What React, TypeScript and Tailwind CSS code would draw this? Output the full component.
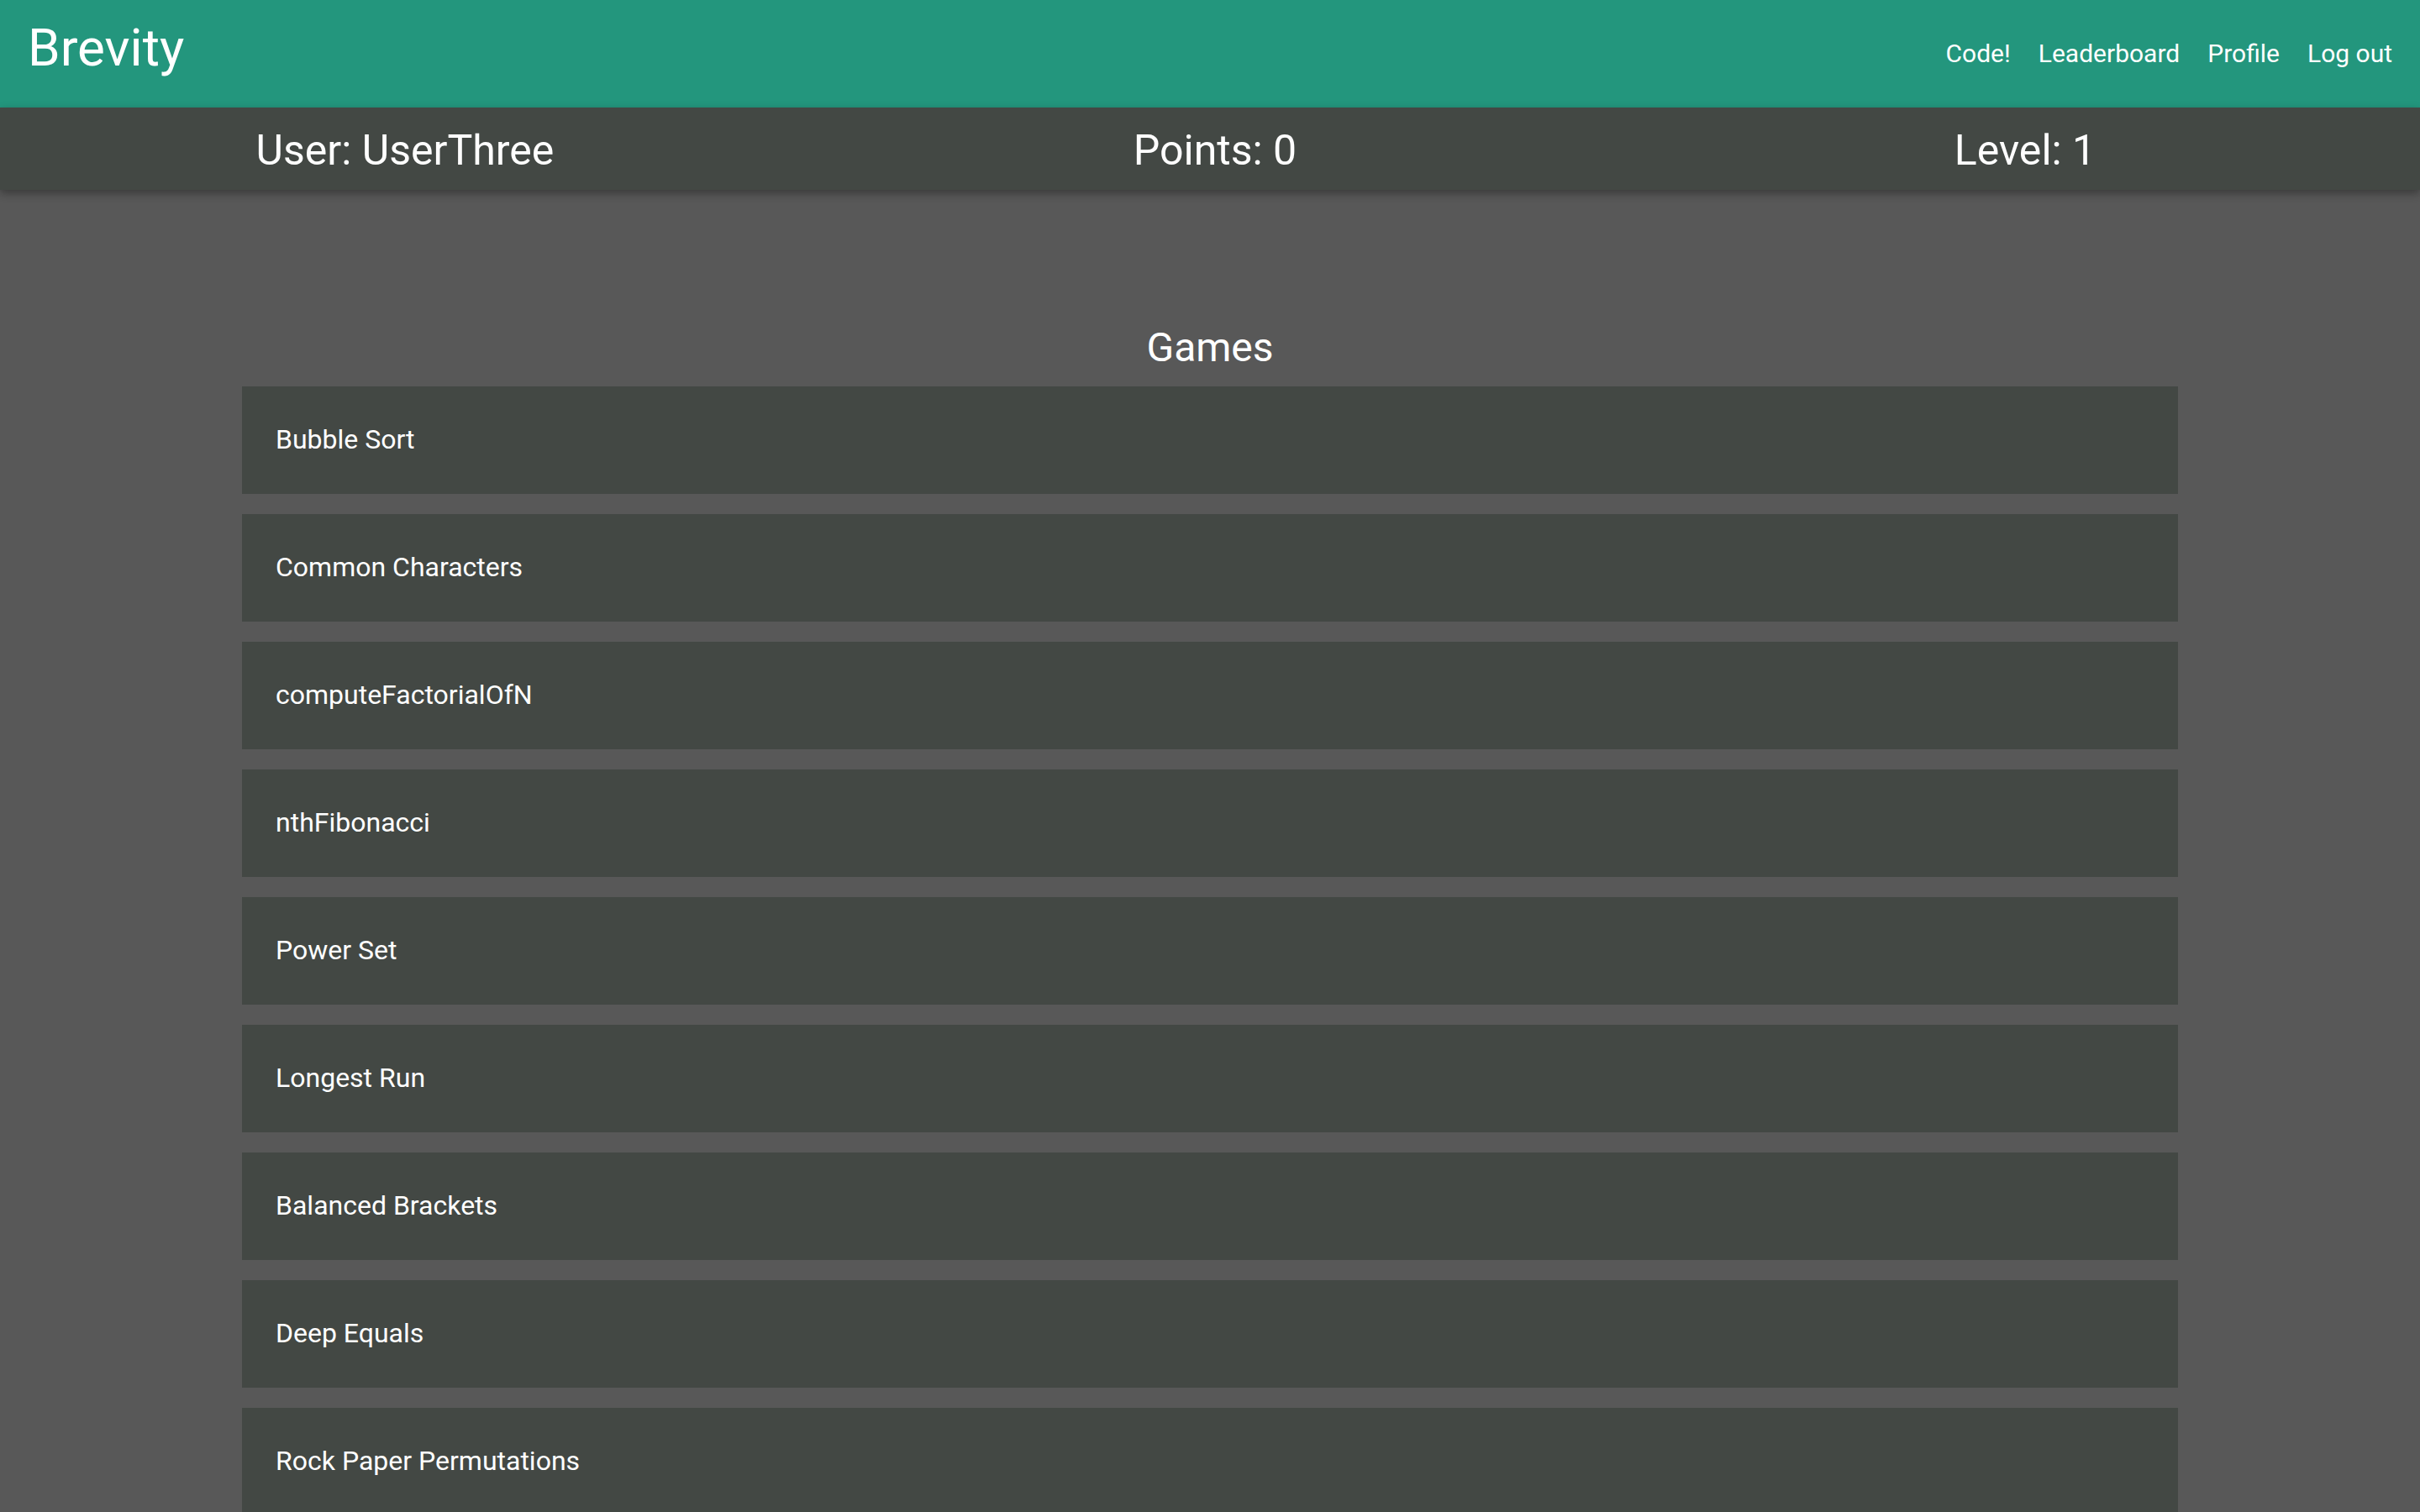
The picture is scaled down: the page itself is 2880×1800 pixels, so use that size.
import React from "react";

const games = [
  "Bubble Sort",
  "Common Characters",
  "computeFactorialOfN",
  "nthFibonacci",
  "Power Set",
  "Longest Run",
  "Balanced Brackets",
  "Deep Equals",
  "Rock Paper Permutations",
];

function App() {
  return (
    <div className="min-h-screen bg-[#585858] text-white font-['Roboto',sans-serif]">
      <nav className="h-[128px] bg-[#23967d] flex justify-between">
        <a className="pl-[33px] pt-[26px] text-[62px] leading-[62px]">Brevity</a>
        <ul className="flex items-center gap-[33px] pr-[33px] text-[30px] leading-[30px]">
          <li>Code!</li>
          <li>Leaderboard</li>
          <li>Profile</li>
          <li>Log out</li>
        </ul>
      </nav>
      {/* stats bar, row is a bit wider than the page like the original */}
      <div className="relative z-10 h-[98px] bg-[#434844] overflow-hidden shadow-[0_4px_10px_rgba(0,0,0,0.35)]">
        <div className="w-[2892px] h-full pt-[3px] grid grid-cols-3 items-center text-center text-[50px] leading-[50px]">
          <div>User: UserThree</div>
          <div>Points: 0</div>
          <div>Level: 1</div>
        </div>
      </div>
      <div className="w-[2304px] mx-auto pt-[160px]">
        <h2 className="text-center text-[48px] leading-[56px] mb-[18px]">Games</h2>
        <div className="flex flex-col gap-[24px]">
          {games.map((g) => (
            <div key={g} className="h-[128px] bg-[#434844] flex items-center px-[40px] pb-[2px] text-[32px]">
              {g}
            </div>
          ))}
        </div>
      </div>
    </div>
  );
}

export default App;
